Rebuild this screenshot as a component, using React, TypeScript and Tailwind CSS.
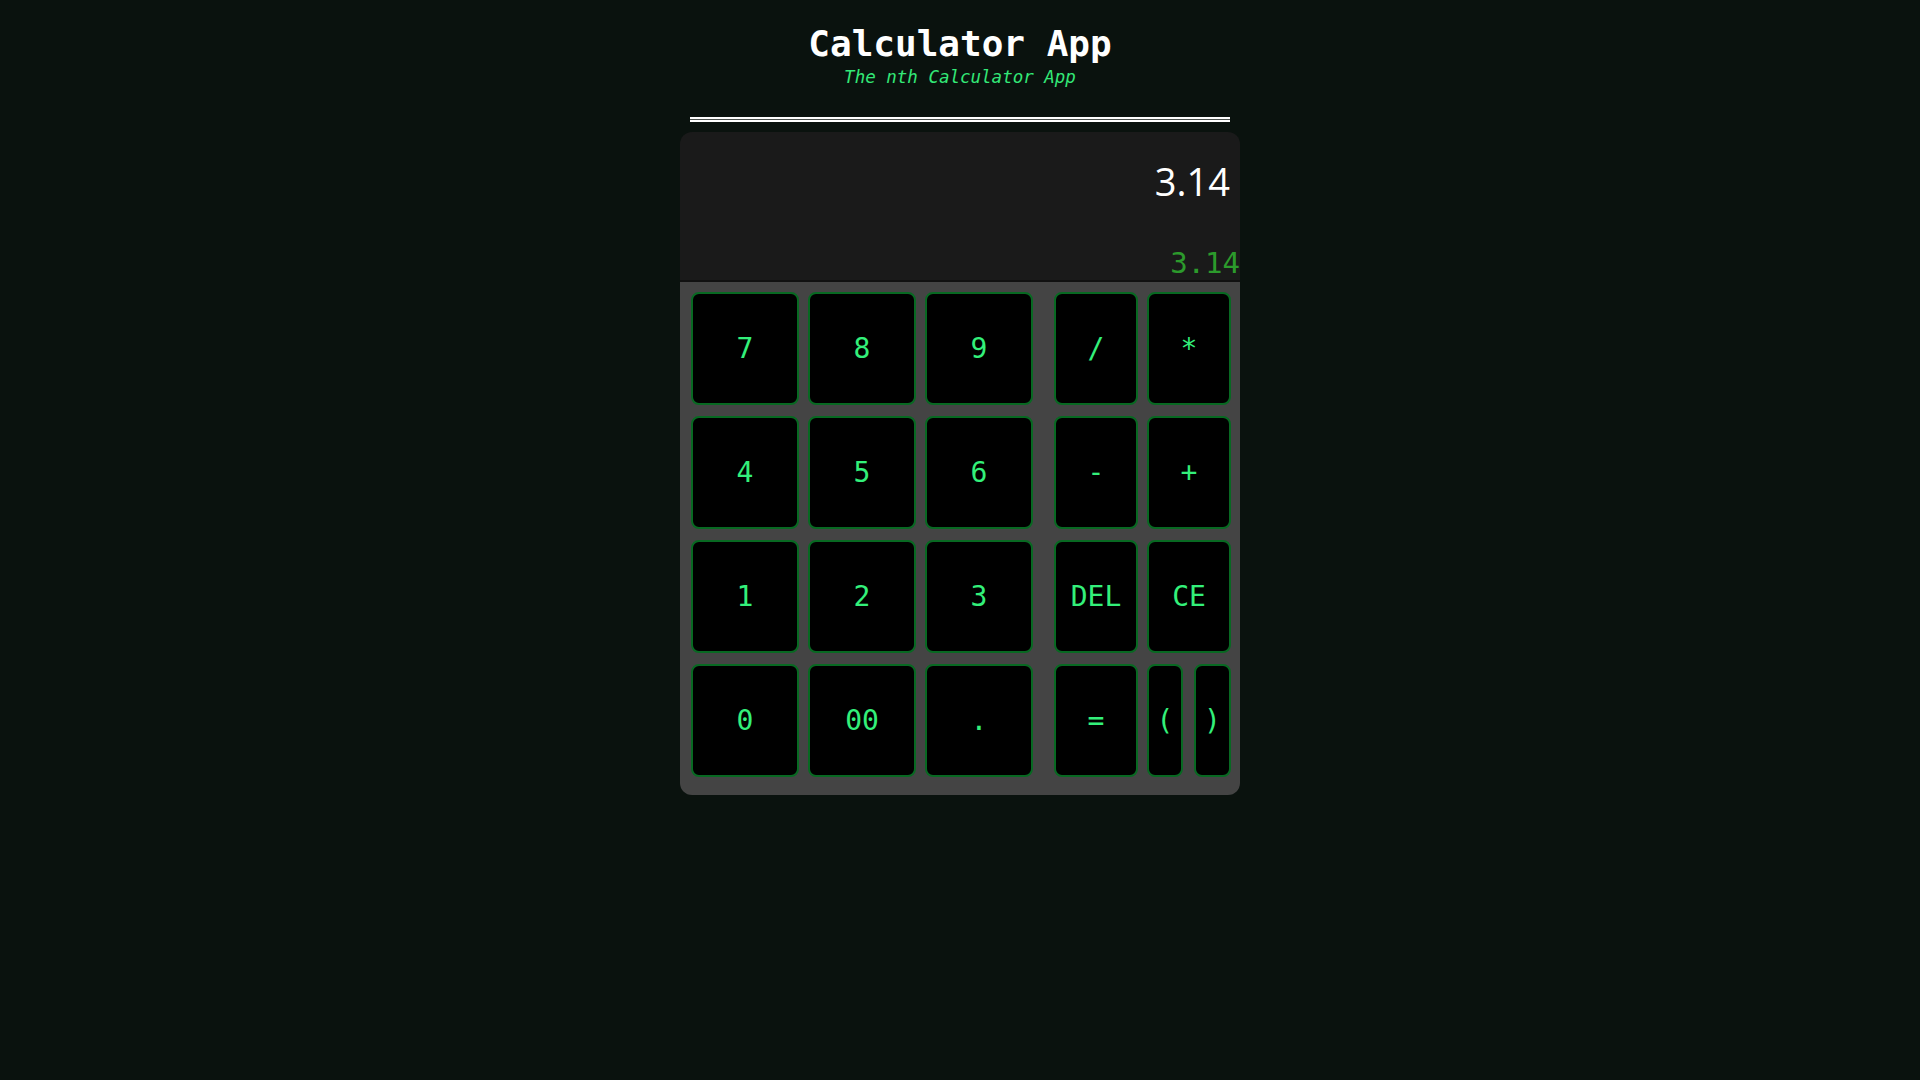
const DIGITS = ["7", "8", "9", "4", "5", "6", "1", "2", "3", "0", "00", "."];
const OPS = ["/", "*", "-", "+", "DEL", "CE", "="];

const mono = "font-['DejaVu_Sans_Mono','Liberation_Mono',monospace]";

/* ── Single key ───────────────────────────────────────────── */
const Key = ({ label, className = "" }: { label: string; className?: string }) => (
  <button
    className={`flex h-[113px] items-center justify-center rounded-lg border-2 border-[#086922] bg-black text-[28px] leading-none text-[#33f07a] ${mono} ${className}`}
  >
    {label}
  </button>
);

export default function App() {
  return (
    <div className="flex min-h-screen w-full flex-col items-center bg-[#0a120e]">
      {/* ── Header ── */}
      <h1 className={`mt-[24px] text-[36px] font-bold leading-[40px] text-white ${mono}`}>
        Calculator App
      </h1>
      <p className={`mt-[1px] text-[17.5px] italic leading-[24px] text-[#33e877] ${mono}`}>
        The nth Calculator App
      </p>

      {/* double rule */}
      <div className="mt-[28px] h-[5px] w-[540px] border-y-2 border-white bg-[#4a4f4c]" />

      {/* ── Calculator ── */}
      <div className="mt-[10px] w-[560px] overflow-hidden rounded-xl">
        {/* display */}
        <div className="flex h-[150px] flex-col justify-between border-b-2 border-[#111] bg-[#1a1a1a]">
          <div className="pt-[26px] pr-[10px] text-right font-['Open_Sans','Noto_Sans',sans-serif] text-[38px] leading-[46px] text-white">
            3.14
          </div>
          <div className={`pb-[1px] text-right text-[29px] leading-[32px] text-[#2c9a2c] ${mono}`}>
            3.14
          </div>
        </div>

        {/* keypad */}
        <div className="flex bg-[#444] pt-[10px] pr-[9px] pb-[18px] pl-[11px]">
          <div className="grid grid-cols-[repeat(3,108px)] gap-x-[9px] gap-y-[11px]">
            {DIGITS.map((d) => (
              <Key key={d} label={d} />
            ))}
          </div>
          <div className="ml-[21px] grid grid-cols-[repeat(2,84px)] gap-x-[9px] gap-y-[11px]">
            {OPS.map((o) => (
              <Key key={o} label={o} />
            ))}
            <div className="flex gap-[11px]">
              <Key label="(" className="w-[36px]" />
              <Key label=")" className="w-[37px]" />
            </div>
          </div>
        </div>
      </div>
    </div>
  );
}
